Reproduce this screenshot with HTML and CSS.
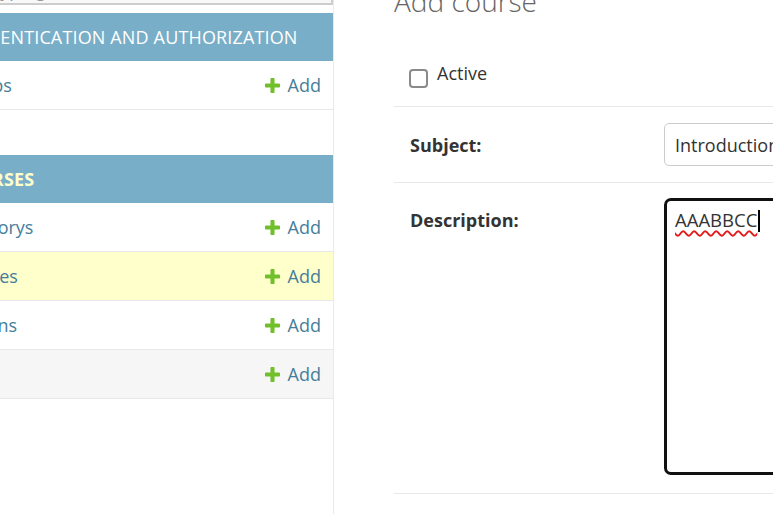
FILE: index.html
```html
<!DOCTYPE html>
<html lang="en">
<head>
<meta charset="utf-8">
<title>Add course | Django site admin</title>
<link rel="stylesheet" href="styles.css">
</head>
<body>
<div class="page">
  <nav class="sidebar">
    <input class="nav-filter" type="search" placeholder="Start typing to filter…">
    <div class="app-module">
      <div class="caption">Authentication and Authorization</div>
      <div class="model-row">
        <a class="model" href="#">Groups</a>
        <a class="addlink" href="#"><svg class="plus" viewBox="192 192 1408 1408" aria-hidden="true"><path fill="#70bf2b" d="M1600 796v192q0 40-28 68t-68 28h-416v416q0 40-28 68t-68 28h-192q-40 0-68-28t-28-68v-416h-416q-40 0-68-28t-28-68v-192q0-40 28-68t68-28h416v-416q0-40 28-68t68-28h192q40 0 68 28t28 68v416h416q40 0 68 28t28 68z"/></svg>Add</a>
      </div>
    </div>
    <div class="app-module current-app">
      <div class="caption">Courses</div>
      <div class="model-row">
        <a class="model" href="#">Categorys</a>
        <a class="addlink" href="#"><svg class="plus" viewBox="192 192 1408 1408" aria-hidden="true"><path fill="#70bf2b" d="M1600 796v192q0 40-28 68t-68 28h-416v416q0 40-28 68t-68 28h-192q-40 0-68-28t-28-68v-416h-416q-40 0-68-28t-28-68v-192q0-40 28-68t68-28h416v-416q0-40 28-68t68-28h192q40 0 68 28t28 68v416h416q40 0 68 28t28 68z"/></svg>Add</a>
      </div>
      <div class="model-row current-model">
        <a class="model" href="#">Courses</a>
        <a class="addlink" href="#"><svg class="plus" viewBox="192 192 1408 1408" aria-hidden="true"><path fill="#70bf2b" d="M1600 796v192q0 40-28 68t-68 28h-416v416q0 40-28 68t-68 28h-192q-40 0-68-28t-28-68v-416h-416q-40 0-68-28t-28-68v-192q0-40 28-68t68-28h416v-416q0-40 28-68t68-28h192q40 0 68 28t28 68v416h416q40 0 68 28t28 68z"/></svg>Add</a>
      </div>
      <div class="model-row">
        <a class="model" href="#">Lessons</a>
        <a class="addlink" href="#"><svg class="plus" viewBox="192 192 1408 1408" aria-hidden="true"><path fill="#70bf2b" d="M1600 796v192q0 40-28 68t-68 28h-416v416q0 40-28 68t-68 28h-192q-40 0-68-28t-28-68v-416h-416q-40 0-68-28t-28-68v-192q0-40 28-68t68-28h416v-416q0-40 28-68t68-28h192q40 0 68 28t28 68v416h416q40 0 68 28t28 68z"/></svg>Add</a>
      </div>
      <div class="model-row hovered">
        <a class="model" href="#">Tags</a>
        <a class="addlink" href="#"><svg class="plus" viewBox="192 192 1408 1408" aria-hidden="true"><path fill="#70bf2b" d="M1600 796v192q0 40-28 68t-68 28h-416v416q0 40-28 68t-68 28h-192q-40 0-68-28t-28-68v-416h-416q-40 0-68-28t-28-68v-192q0-40 28-68t68-28h416v-416q0-40 28-68t68-28h192q40 0 68 28t28 68v416h416q40 0 68 28t28 68z"/></svg>Add</a>
      </div>
    </div>
  </nav>

  <main class="content">
    <h1 class="title">Add course</h1>
    <div class="fieldset">
      <div class="form-row checkbox-row">
        <span class="checkbox"></span>
        <span class="check-label">Active</span>
      </div>
      <div class="form-row">
        <span class="field-label">Subject:</span>
        <div class="select">Introduction to Programming</div>
      </div>
      <div class="form-row desc-row">
        <span class="field-label">Description:</span>
        <div class="textarea"><span class="typed">AAABBCC</span><span class="caret"></span></div>
      </div>
    </div>
  </main>
</div>
</body>
</html>
```

FILE: styles.css
```css
html, body {
  margin: 0;
  padding: 0;
  background: #fff;
  overflow: hidden;
}

body {
  font-family: "Open Sans", "Noto Sans", "Liberation Sans", sans-serif;
  font-size: 18px;
  line-height: 24px;
  color: #333;
}

a {
  text-decoration: none;
}

.page {
  display: flex;
  align-items: stretch;
  width: 1150px;
  height: 600px;
  margin-top: -30px;
  margin-left: -61px;
}

/* ---------- sidebar ---------- */

.sidebar {
  flex: 0 0 394px;
  width: 394px;
  border-right: 1px solid #eaeaea;
  padding-top: 5px;
}

.nav-filter {
  display: block;
  box-sizing: border-box;
  width: 100%;
  height: 30px;
  margin: 0 0 8px;
  padding: 0 8px;
  border: 2px solid #cdcdcd;
  background: #f8f8f8;
  font-family: inherit;
  font-size: 18px;
  color: #333;
  outline: none;
}

.nav-filter::placeholder {
  color: #999;
}

.app-module {
  margin-bottom: 45px;
}

.caption {
  height: 48px;
  display: flex;
  align-items: center;
  padding: 0 11px 0 13px;
  background: #79aec8;
  color: #fff;
  text-transform: uppercase;
  letter-spacing: 0.15px;
  font-size: 18px;
}

.current-app .caption {
  color: #ffc;
  font-weight: 700;
}

.model-row {
  height: 48px;
  display: flex;
  align-items: center;
  justify-content: space-between;
  padding: 0 12px 0 11px;
  border-bottom: 1px solid #e8e8e8;
}

.current-model {
  background: #ffc;
}

.hovered {
  background: #f6f6f6;
}

.model {
  color: #447e9b;
}

.addlink {
  display: flex;
  align-items: center;
  gap: 8px;
  color: #447e9b;
}

.plus {
  width: 15px;
  height: 15px;
  display: block;
}

/* ---------- main content ---------- */

.content {
  flex: 1 1 auto;
  padding: 15px 0 0 60px;
}

.title {
  margin: 0 0 28px;
  font-size: 28px;
  line-height: 32px;
  font-weight: 300;
  color: #666;
}

.form-row {
  display: flex;
  align-items: flex-start;
  padding: 16px 0 16px 16px;
  border-bottom: 1px solid #e8e8e8;
}

.checkbox-row {
  padding-left: 15px;
  padding-bottom: 18px;
}

.checkbox {
  box-sizing: border-box;
  width: 19px;
  height: 19px;
  margin-top: 8px;
  margin-right: 9px;
  border: 2px solid #8a8a8a;
  border-radius: 4px;
  background: #fff;
}

.check-label {
  color: #333;
}

.field-label {
  flex: 0 0 254px;
  padding-top: 10px;
  font-weight: 700;
  color: #333;
}

.select {
  box-sizing: border-box;
  width: 330px;
  height: 43px;
  display: flex;
  align-items: center;
  padding: 0 10px;
  border: 1px solid #ccc;
  border-radius: 5px;
  white-space: nowrap;
  color: #333;
  background: #fff;
}

.desc-row {
  padding-top: 15px;
  padding-bottom: 18px;
}

.textarea {
  box-sizing: border-box;
  width: 400px;
  height: 277px;
  padding: 7px 8px;
  border: 3px solid #111;
  border-radius: 7px;
  color: #333;
  background: #fff;
  white-space: nowrap;
  font-size: 18.5px;
}

.typed {
  text-decoration: underline wavy #e21b1b;
  text-decoration-thickness: 1.5px;
  text-underline-offset: 3px;
}

.caret {
  display: inline-block;
  width: 2px;
  height: 22px;
  margin-left: 1px;
  vertical-align: -5px;
  background: #000;
}
```
